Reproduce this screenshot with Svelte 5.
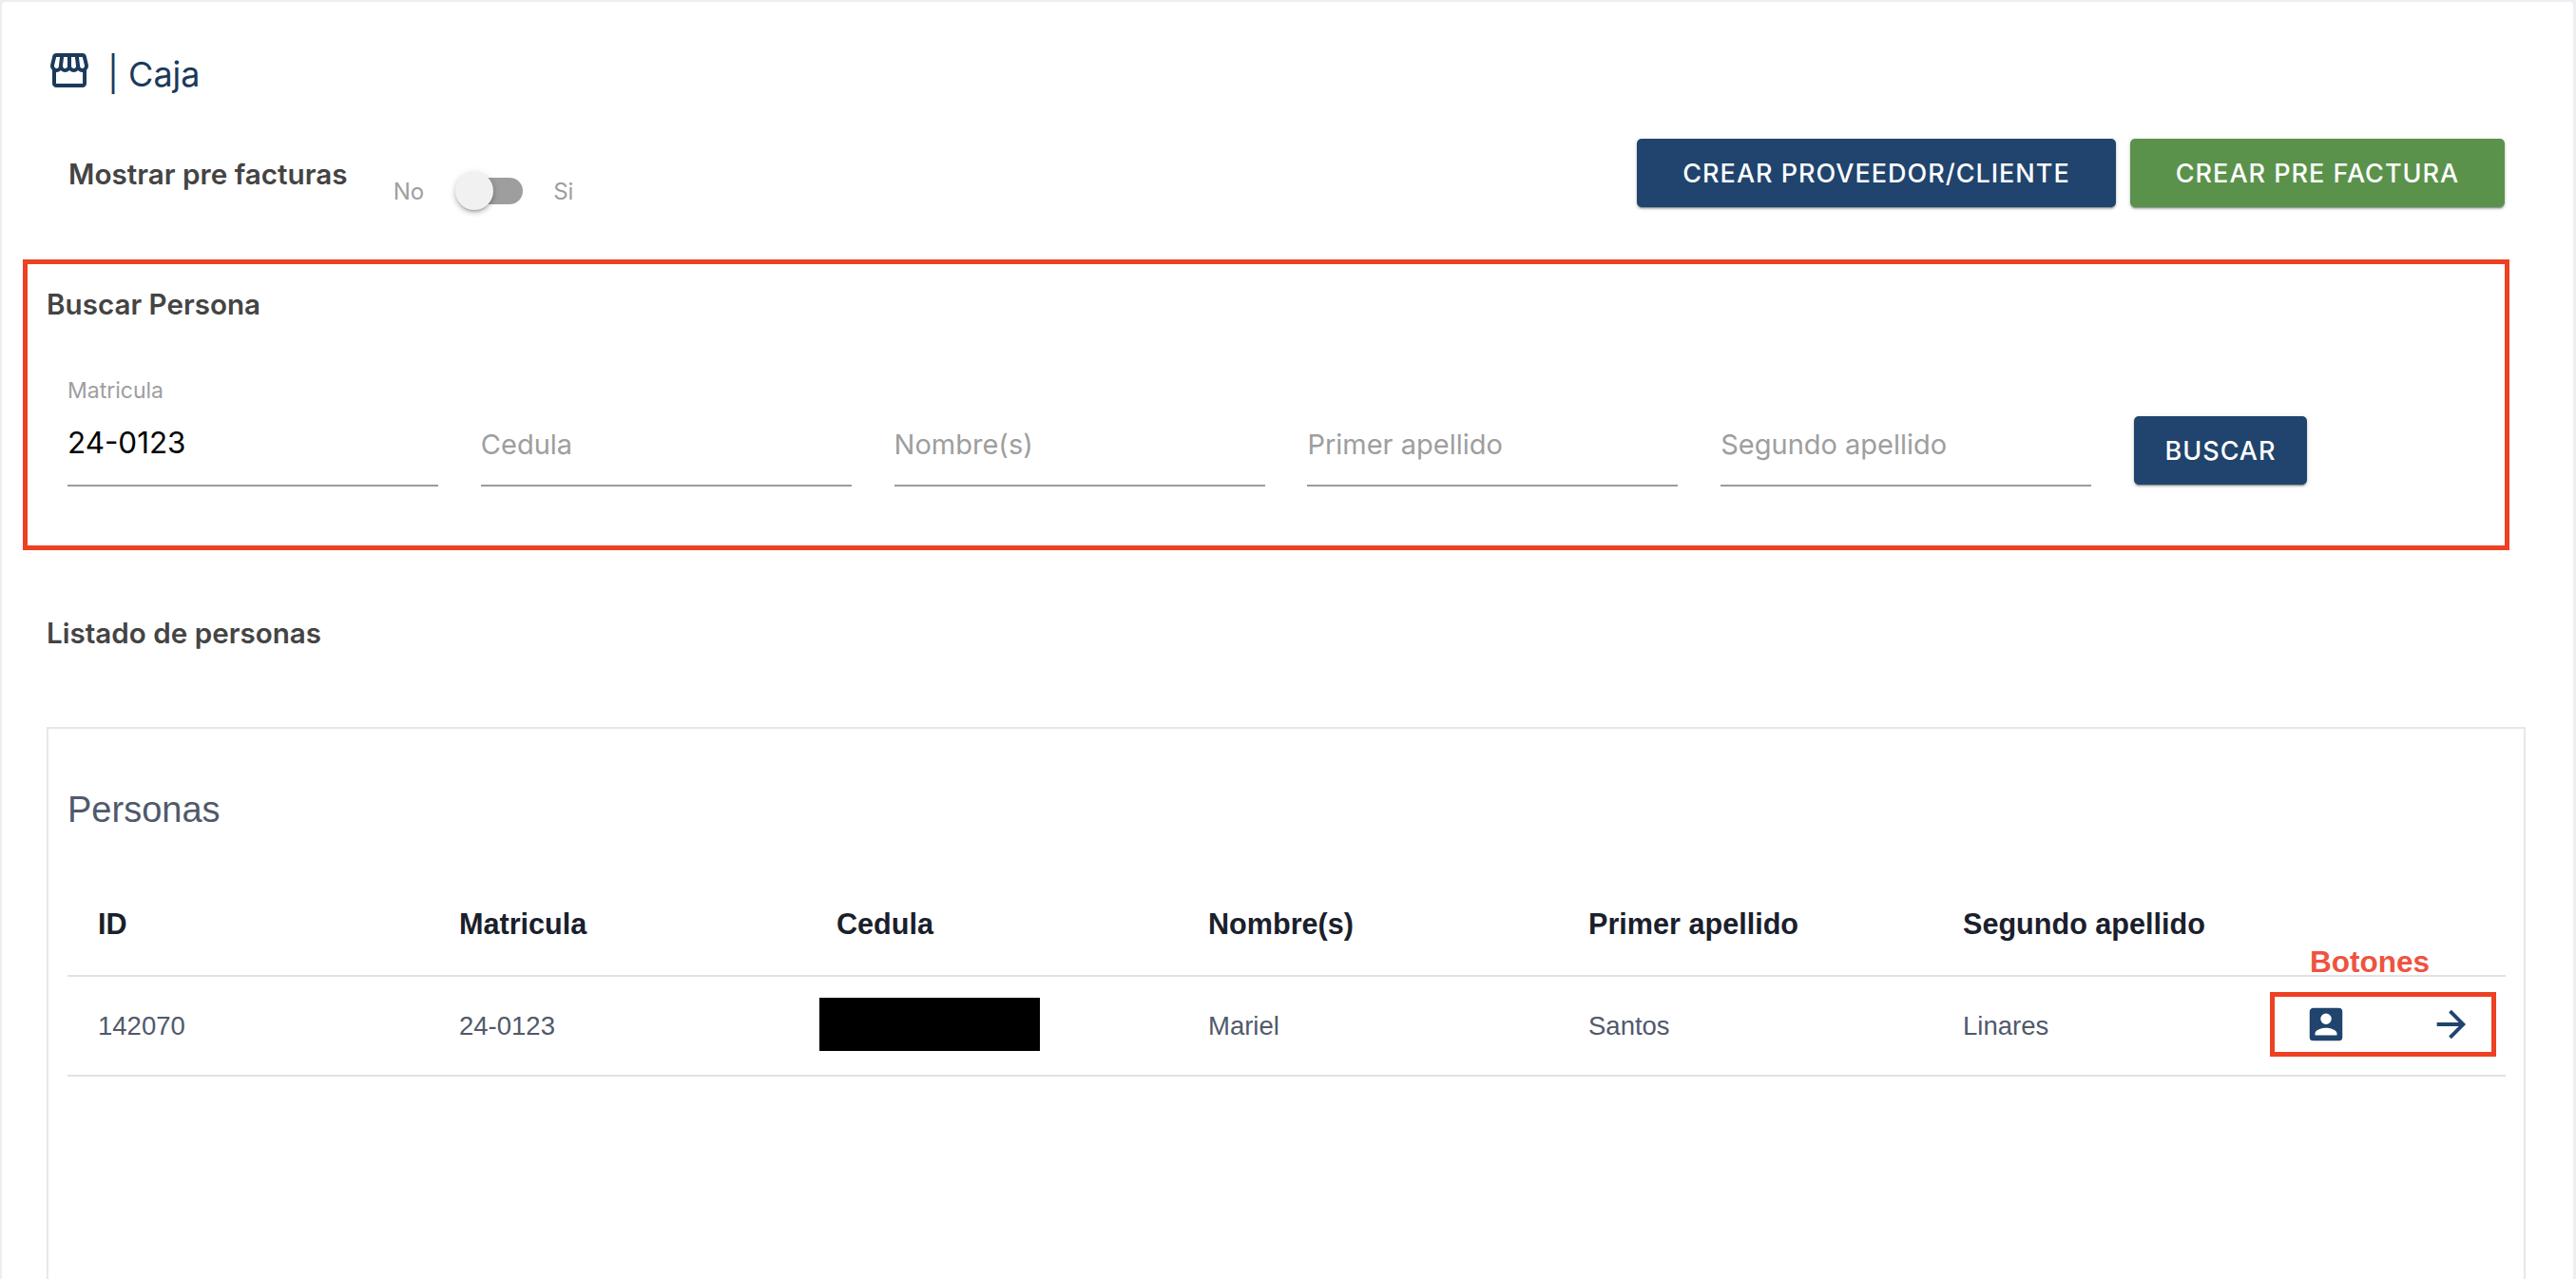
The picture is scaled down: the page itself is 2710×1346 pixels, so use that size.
<script>
  const fields = [
    { label: 'Matricula', value: '24-0123' },
    { label: 'Cedula' },
    { label: 'Nombre(s)' },
    { label: 'Primer apellido' },
    { label: 'Segundo apellido' }
  ];
  const cols = [380, 397, 391, 400, 394, 337, 266];
</script>

<div class="card">
  <header class="title">
    <svg class="store" viewBox="0 0 24 24" aria-hidden="true"><path d="M5.06 3C4.63 3 4.22 3.14 3.84 3.42C3.46 3.7 3.24 4.06 3.14 4.5L2.11 8.91C1.86 9.96 2.08 10.87 2.77 11.64L3 11.86V19C3 19.5 3.2 20 3.61 20.39S4.5 21 5 21H19C19.5 21 20 20.8 20.39 20.39S21 19.5 21 19V11.86L21.23 11.64C21.92 10.87 22.14 9.96 21.89 8.91L20.86 4.5C20.73 4.06 20.5 3.7 20.13 3.42C19.77 3.14 19.38 3 18.94 3H5.06M18.89 4.97L19.97 9.38C20.06 9.81 19.97 10.2 19.69 10.55C19.44 10.86 19.13 11 18.75 11C18.44 11 18.17 10.9 17.95 10.66C17.73 10.43 17.61 10.16 17.58 9.84L16.97 5L18.89 4.97M5.06 5H7.03L6.42 9.84C6.3 10.63 5.91 11 5.25 11C4.84 11 4.53 10.86 4.31 10.55C4.03 10.2 3.94 9.81 4.03 9.38L5.06 5M9.05 5H11V9.7C11 10.05 10.89 10.35 10.64 10.62C10.39 10.88 10.08 11 9.7 11C9.36 11 9.07 10.88 8.84 10.59S8.5 10 8.5 9.66V9.5L9.05 5M13 5H14.95L15.5 9.5C15.58 9.92 15.5 10.27 15.21 10.57C14.95 10.86 14.61 11 14.2 11C13.89 11 13.61 10.88 13.36 10.62C13.11 10.35 13 10.05 13 9.7V5M7.45 12.05C8.08 12.69 8.86 13 9.8 13C10.64 13 11.38 12.69 12 12.05C12.69 12.69 13.45 13 14.3 13C15.17 13 15.91 12.69 16.55 12.05C17.11 12.67 17.86 13 18.8 13H19.03V19H5V13H5.25C6.16 13 6.89 12.69 7.45 12.05Z"/></svg>
    <h1>| Caja</h1>
  </header>

  <div class="toolbar">
    <div class="toggle-group">
      <span class="toggle-title">Mostrar pre facturas</span>
      <div class="switch">
        <span>No</span>
        <span class="track"><span class="thumb"></span></span>
        <span>Si</span>
      </div>
    </div>
    <div class="actions">
      <button class="btn wide">CREAR PROVEEDOR/CLIENTE</button>
      <button class="btn wide green">CREAR PRE FACTURA</button>
    </div>
  </div>

  <section class="search">
    <h2>Buscar Persona</h2>
    <div class="fields">
      {#each fields as f}
        <div class="field">
          {#if f.value}
            <span class="float">{f.label}</span>
            <span class="value">{f.value}</span>
          {:else}
            <span class="placeholder">{f.label}</span>
          {/if}
        </div>
      {/each}
      <button class="btn search-btn">BUSCAR</button>
    </div>
  </section>

  <h2 class="list-title">Listado de personas</h2>

  <div class="box">
    <h3>Personas</h3>
    <table>
      <colgroup>
        {#each cols as c}<col style="width:{c}px" />{/each}
      </colgroup>
      <thead>
        <tr>
          <th>ID</th><th>Matricula</th><th>Cedula</th><th>Nombre(s)</th><th>Primer apellido</th><th>Segundo apellido</th><th class="last"><span class="note">Botones</span></th>
        </tr>
      </thead>
      <tbody>
        <tr>
          <td>142070</td>
          <td>24-0123</td>
          <td class="redacted-cell"><span class="redacted"></span></td>
          <td>Mariel</td>
          <td>Santos</td>
          <td>Linares</td>
          <td class="last">
            <div class="marker">
              <svg viewBox="0 0 24 24" class="ico"><path d="M6,17C6,15 10,14 12,14C14,14 18,15 18,17V18H6M15,9A3,3 0 0,1 12,12A3,3 0 0,1 9,9A3,3 0 0,1 12,6A3,3 0 0,1 15,9M3,5V19A2,2 0 0,0 5,21H19A2,2 0 0,0 21,19V5A2,2 0 0,0 19,3H5C3.89,3 3,3.9 3,5Z"/></svg>
              <svg viewBox="0 0 24 24" class="ico arrow"><path d="M4,11V13H16L10.5,18.5L11.92,19.92L19.84,12L11.92,4.08L10.5,5.5L16,11H4Z"/></svg>
            </div>
          </td>
        </tr>
      </tbody>
    </table>
  </div>
</div>

<style>
  :global(body) {
    margin: 0;
    background: #eceef2;
    overflow: hidden;
  }
  .card {
    box-sizing: border-box;
    margin: 2px 3px 0 2px;
    height: 1344px;
    background: #fff;
    border-radius: 4px 4px 0 0;
    overflow: hidden;
    font-family: Inter, "Liberation Sans", sans-serif;
    position: relative;
  }
  .title {
    display: flex;
    align-items: flex-start;
    padding: 48px 0 0 47px;
    height: 48px;
  }
  .store { width: 48px; height: 48px; fill: #1b3a5c; }
  h1 {
    margin: 6px 0 0 16px;
    font-size: 36px;
    line-height: 44px;
    font-weight: 400;
    color: #1b3a5c;
  }
  .toolbar {
    display: flex;
    justify-content: space-between;
    align-items: flex-start;
    margin-top: 48px;
    padding: 0 72px 0 70px;
  }
  .toggle-group { display: flex; align-items: flex-start; }
  .toggle-title {
    margin-top: 19px;
    font-size: 29.7px;
    line-height: 36px;
    font-weight: 600;
    color: #444;
  }
  .switch {
    display: flex;
    align-items: center;
    margin: 35px 0 0 48px;
    height: 40px;
    font-size: 24px;
    color: #9e9e9e;
  }
  .track {
    position: relative;
    display: block;
    width: 64px;
    height: 28px;
    margin: 0 32px 0 40px;
    border-radius: 14px;
    background: #9e9e9e;
  }
  .thumb {
    position: absolute;
    left: -7px;
    top: -6px;
    width: 40px;
    height: 40px;
    border-radius: 50%;
    background: #f1f1f1;
    box-shadow: 0 3px 3px -2px rgba(0,0,0,.25), 0 3px 5px 0 rgba(0,0,0,.16), 0 1px 8px 0 rgba(0,0,0,.12);
  }
  .actions { display: flex; gap: 15px; }
  .btn {
    height: 72px;
    border: 0;
    border-radius: 5px;
    background: #20446d;
    color: #fff;
    font-family: Inter, "Liberation Sans", sans-serif;
    font-size: 27px;
    font-weight: 500;
    letter-spacing: 1px;
    box-shadow: 0 3px 1px -2px rgba(0,0,0,.25), 0 2px 2px 0 rgba(0,0,0,.18), 0 1px 5px 0 rgba(0,0,0,.14);
    padding: 0;
  }
  .wide { width: 504px; }
  .wide.green { width: 394px; background: #5a924b; }
  .search {
    box-sizing: border-box;
    margin: 52px 0 0 22px;
    width: 2616px;
    height: 306px;
    border: 5px solid #ee4023;
    padding: 24px 0 0 20px;
  }
  h2 {
    margin: 0;
    font-size: 29.6px;
    line-height: 36px;
    font-weight: 600;
    color: #444;
  }
  .fields {
    display: flex;
    gap: 44.8px;
    margin: 58px 0 0 22px;
  }
  .field {
    box-sizing: border-box;
    position: relative;
    width: 390px;
    height: 116px;
    border-bottom: 2px solid #9b9b9b;
  }
  .float {
    position: absolute;
    left: 0;
    top: 0;
    font-size: 23px;
    line-height: 30px;
    color: #9e9e9e;
  }
  .value, .placeholder {
    position: absolute;
    left: 0;
    font-size: 31.4px;
    line-height: 40px;
  }
  .value { top: 50px; color: #000; }
  .placeholder { top: 52px; color: #9e9e9e; font-size: 29px; }
  .search-btn { width: 182px; margin-top: 42px; height: 72px; }
  .list-title { margin: 69px 0 0 47px; }
  .box {
    box-sizing: border-box;
    margin: 81px 0 0 47px;
    width: 2608px;
    height: 900px;
    border: 2px solid #e7e7e7;
    padding: 0 19px 0 20px;
    font-family: "Liberation Sans", Arial, sans-serif;
  }
  h3 {
    margin: 0;
    padding-top: 62px;
    font-size: 38px;
    line-height: 46px;
    font-weight: 400;
    color: #50596b;
  }
  table {
    table-layout: fixed;
    border-collapse: collapse;
    width: 2565px;
    margin-top: 66px;
  }
  th {
    height: 63px;
    padding: 0 0 22px 32px;
    text-align: left;
    font-size: 30.6px;
    font-weight: 700;
    color: #1a202c;
    border-bottom: 2px solid #e2e2e2;
  }
  td {
    height: 103px;
    padding: 0 0 0 32px;
    font-size: 27.5px;
    color: #50596b;
    border-bottom: 2px solid #e2e2e2;
  }
  .last { position: relative; padding: 0; }
  .redacted-cell { padding-left: 14px; }
  .redacted {
    display: block;
    width: 232px;
    height: 56px;
    margin-bottom: 4px;
    background: #000;
  }
  .note {
    position: absolute;
    left: 60px;
    bottom: -4px;
    font-size: 31.5px;
    line-height: 36px;
    font-weight: 700;
    color: #ef5340;
  }
  .marker {
    box-sizing: border-box;
    position: absolute;
    left: 18px;
    top: 16px;
    width: 238px;
    height: 68px;
    border: 5px solid #ee4023;
    display: flex;
    justify-content: space-between;
    align-items: center;
    padding: 0 19px 0 31px;
  }
  .ico { width: 46px; height: 46px; fill: #20446d; }
</style>
